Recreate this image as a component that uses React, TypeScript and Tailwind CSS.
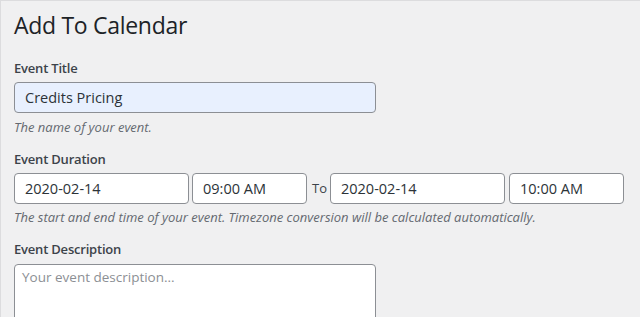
import React from "react";

const font = { fontFamily: '"Open Sans", "Noto Sans", sans-serif' };

function Input({ value, className = "" }: { value: string; className?: string }) {
  return (
    <div
      className={`h-[31px] flex items-center px-[10px] border border-[#8c8f94] rounded-[4px] text-[14.5px] text-[#2c3338] ${className}`}
    >
      {value}
    </div>
  );
}

export default function App() {
  return (
    <div
      className="w-[640px] h-[317px] overflow-hidden bg-[#f0f0f1] border-t border-l border-[#dcdcde] pl-[13px]"
      style={font}
    >
      <h2 className="text-[23px] leading-[30px] text-[#1d2327] mt-[9px] tracking-[-0.3px]">Add To Calendar</h2>
      <div className="mt-[19px] text-[13px] leading-[18px] font-semibold text-[#3c434a] tracking-[-0.2px]">Event Title</div>
      <Input value="Credits Pricing" className="mt-[5px] w-[362px] bg-[#e8f0fe]" />
      <div className="mt-[5px] text-[13px] leading-[18px] italic text-[#646970]">The name of your event.</div>

      <div className="mt-[14px] text-[13px] leading-[18px] font-semibold text-[#3c434a] tracking-[-0.2px]">Event Duration</div>
      <div className="mt-[5px] flex items-center">
        <Input value="2020-02-14" className="w-[175px] bg-white" />
        <Input value="09:00 AM" className="ml-[3px] w-[115px] bg-white" />
        <span className="ml-[5px] mr-[3px] text-[13px] text-[#3c434a]">To</span>
        <Input value="2020-02-14" className="w-[175px] bg-white" />
        <Input value="10:00 AM" className="ml-[4px] w-[115px] bg-white" />
      </div>
      <div className="mt-[4px] text-[13px] leading-[18px] italic text-[#646970]">
        The start and end time of your event. Timezone conversion will be calculated automatically.
      </div>

      <div className="mt-[14px] text-[13px] leading-[18px] font-semibold text-[#3c434a] tracking-[-0.2px]">Event Description</div>
      <div className="mt-[6px] w-[362px] h-[80px] bg-white border border-[#8c8f94] rounded-[4px] px-[7px] pt-[2px] text-[13.5px] text-[#8c8f94]">
        Your event description...
      </div>
    </div>
  );
}
